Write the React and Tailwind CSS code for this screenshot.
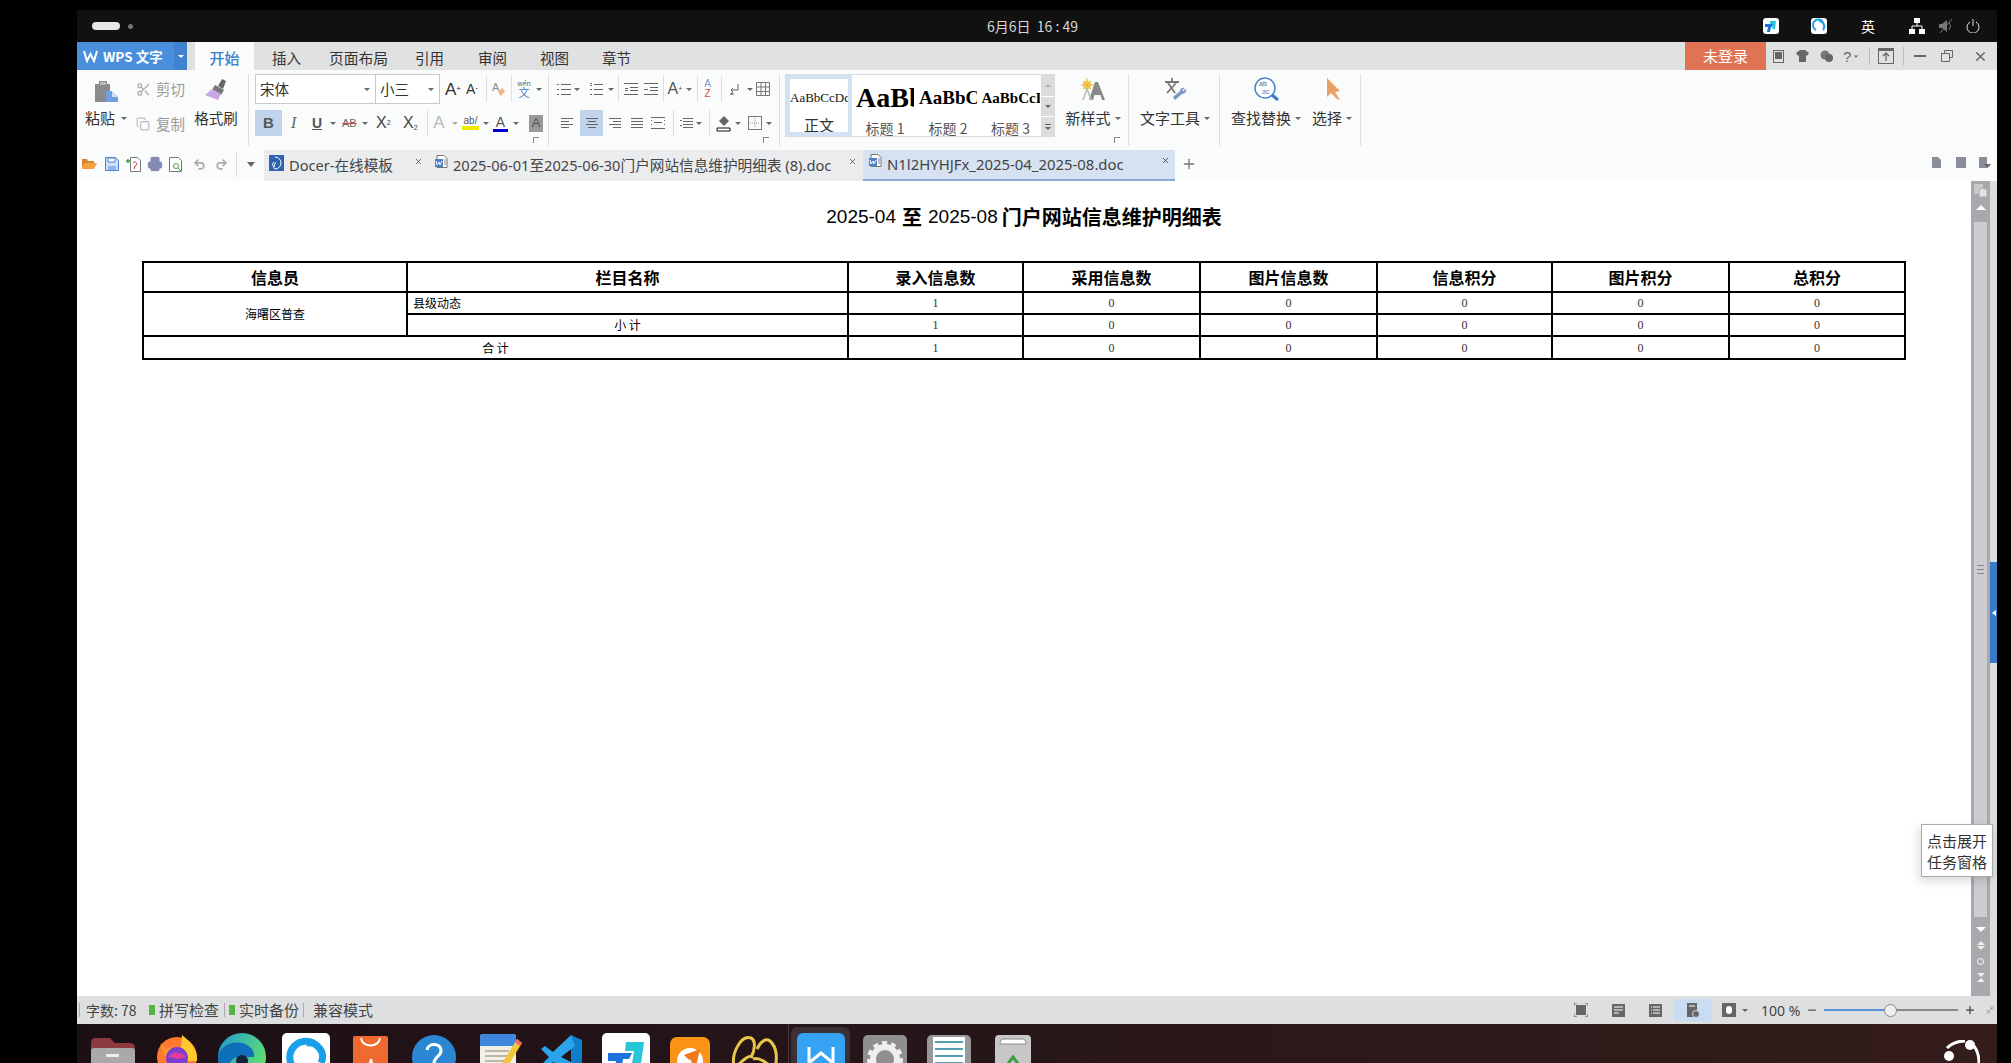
import { Scissors, Copy, Undo2, Redo2, Printer, X, Plus, Minus, Minimize2 } from "lucide-react"

const cjk = "font-['Noto_Sans_CJK_SC','Noto_Sans',sans-serif]"

function Svg({ w, h, className = "", children })
{
    return <svg width={w} height={h || w} viewBox={`0 0 ${w} ${h || w}`} className={"shrink-0 " + className}>{children}</svg>
}

function Caret({ className = "" })
{
    return <span className={"shrink-0 w-0 h-0 border-x-[3px] border-x-transparent border-t-[3px] border-t-[#666] " + className}></span>
}

function Sep({ className = "" })
{
    return <span className={"shrink-0 w-px h-[26px] bg-[#dcdfe0] " + className}></span>
}

function Launcher({ className = "" })
{
    return <span className={"absolute bottom-[3px] w-[6px] h-[6px] border-t border-l border-[#888] " + className}></span>
}

// ---- ribbon icons
const Lines = ({ className, rows }) => (
    <Svg w={14} className={className}>
        {rows.map((r, i) => <rect key={i} x={r[0]} y={r[1]} width={r[2]} height="1" fill="#666" />)}
    </Svg>
)

function PasteIcon()
{
    return (
        <Svg w={24} h={22}>
            <path d="M1 4h4V1h8v3h3v7h-3v11H1z" fill="#8b8b8b" />
            <path d="M6 2h6v3H6z" fill="#bbb" />
            <path d="M12 11h6l6 6v5H12z" fill="#6f9fe0" />
            <path d="M18 11l6 6h-6z" fill="#cfe0f6" />
        </Svg>
    )
}

function BrushIcon()
{
    return (
        <Svg w={24} h={22}>
            <path d="M14 8l4-7 4 2-3 8z" fill="#666" />
            <path d="M11 7l9 5-3 5-9-5z" fill="#777" />
            <path d="M8 11l9 5-3 6-13-5z" fill="#c9a6ea" />
        </Svg>
    )
}

function StyleNewIcon()
{
    return (
        <Svg w={25} h={23}>
            <circle cx="6" cy="7" r="4.500" fill="#f5d66a" />
            <path d="M6 0v14M0 7h13M2 3l8 8M10 3l-8 8" stroke="#e8b33c" strokeWidth="1" />
            <path d="M8 22l6-18h3l7 18h-3l-1.500-5h-6L12 22z" fill="#8a8a8a" />
            <path d="M2 22l4-11 4 11" stroke="#bbb" strokeWidth="1.500" fill="none" />
        </Svg>
    )
}

function TextToolIcon()
{
    return (
        <Svg w={23} h={23}>
            <path d="M8 0v3M1 4h14M4 5l7 10M12 5L3 15" stroke="#777" strokeWidth="1.800" fill="none" />
            <path d="M21 10c-2-1-5 0-5 3l-7 6 2 3 7-6c3 0 5-3 4-5l-3 2-1-1z" fill="#7d96c9" />
        </Svg>
    )
}

function FindIcon()
{
    return (
        <Svg w={25} h={24}>
            <circle cx="11" cy="11" r="10" fill="#fff" stroke="#4a86cf" strokeWidth="1.500" />
            <path d="M18 18l6 5" stroke="#3b78c4" strokeWidth="3" />
            <text x="5" y="9" fontSize="7" fill="#666" fontFamily="Liberation Sans">ab</text>
            <text x="8" y="17" fontSize="7" fill="#4a86cf" fontFamily="Liberation Sans">ac</text>
        </Svg>
    )
}

function CursorIcon()
{
    return (
        <Svg w={15} h={22}>
            <path d="M1 0l13 13-5 1 5 8-3-1-6-6-4 4z" fill="#e9a064" />
        </Svg>
    )
}

function DocTabIcon({ className = "", color = "#4f7fc4" })
{
    return (
        <Svg w={14} h={15} className={className}>
            <path d="M3 .5h7l3 3v9H3z" fill="#fff" stroke="#777" />
            <path d="M1 4h8v8H1z" fill={color} />
            <path d="M2 6l1 4 2-3 1 3 2-4" stroke="#fff" fill="none" />
            <path d="M10 5h2M10 7h2M10 9h2" stroke="#888" />
        </Svg>
    )
}

// ---- dock icons
function Folder()
{
    return (
        <Svg w={44} h={40}>
            <path d="M0 6q0-5 5-5h14l5 5h15q5 0 5 5v12H0z" fill="#8c3a3f" />
            <path d="M0 14q0-3 3-3h38q3 0 3 3v26H0z" fill="#a9a9aa" />
            <rect x="15" y="17" width="13" height="3" rx="1" fill="#eee" />
        </Svg>
    )
}

function Firefox()
{
    return (
        <Svg w={42} h={40}>
            <circle cx="21" cy="22" r="20" fill="#ff7a2f" />
            <path d="M26 0c10 8 16 16 15 26H24z" fill="#ffc92e" />
            <path d="M4 8l6 6 8-2-8 10z" fill="#ff9b2f" />
            <circle cx="21" cy="23" r="11" fill="#7a3fd0" />
            <path d="M12 22c4-6 14-6 18 0l-8 2z" fill="#e33aa0" />
        </Svg>
    )
}

function Edge()
{
    return (
        <Svg w={48} h={40}>
            <defs>
                <linearGradient id="edgeg" x1="0" y1="0" x2="1" y2="0.5">
                    <stop offset="0" stopColor="#1e9bd8" />
                    <stop offset="1" stopColor="#5fdc6e" />
                </linearGradient>
            </defs>
            <circle cx="24" cy="24" r="24" fill="url(#edgeg)" />
            <path d="M0 24C2 12 14 8 24 10c8 2 13 8 12 14H22c-8 0-14 6-10 18C4 38 0 32 0 24z" fill="#0f6fb8" />
            <circle cx="24" cy="28" r="6" fill="#16233a" />
        </Svg>
    )
}

function WhiteApp()
{
    return (
        <Svg w={48} h={40}>
            <rect width="48" height="48" rx="5" fill="#fff" />
            <path d="M36 14A16 16 0 1 0 14 37M24 10a14 14 0 0 1 15 20" stroke="#1aa0e8" strokeWidth="7" fill="none" />
        </Svg>
    )
}

function Bag()
{
    return (
        <Svg w={35} h={37}>
            <rect width="35" height="37" rx="2" fill="#ef6a2f" />
            <path d="M8 2c1 10 18 10 19 0" stroke="#fff" strokeWidth="2" fill="none" />
            <path d="M13 37l4-14h2l4 14h-3l-2-8-2 8z" fill="#fff" />
        </Svg>
    )
}

function Help()
{
    return (
        <Svg w={44} h={38}>
            <circle cx="22" cy="22" r="22" fill="#2b86d4" />
            <path d="M15 15c1-8 15-7 14 1 0 5-7 6-7 12" stroke="#fff" strokeWidth="3" fill="none" />
            <circle cx="22" cy="34" r="2" fill="#fff" />
        </Svg>
    )
}

function Notes()
{
    return (
        <Svg w={42} h={39}>
            <rect x="0" y="0" width="36" height="44" rx="3" fill="#f2efe6" />
            <path d="M0 3q0-3 3-3h30q3 0 3 3v9H0z" fill="#3f86de" />
            <path d="M5 17h24M5 22h24M5 27h24M5 32h18" stroke="#bdb8a8" strokeWidth="2" />
            <path d="M37 5l5 4-16 26-6 3 1-7z" fill="#f5c53a" />
            <path d="M37 5l5 4-2 3-5-4z" fill="#e86a6a" />
        </Svg>
    )
}

function VsCode()
{
    return (
        <Svg w={41} h={38}>
            <path d="M30 0l11 5v33H30z" fill="#0e7ecb" />
            <path d="M30 0L12 17 4 11 0 14l8 8-8 8 4 3 8-6 18 11 4-9-14-7 14-11z" fill="#2ba4ec" />
        </Svg>
    )
}

function BlueArrowApp()
{
    return (
        <Svg w={48} h={40}>
            <rect width="48" height="48" rx="5" fill="#fff" />
            <path d="M24 9h18l-3 22H30l2-13h-9z" fill="#27c6d8" />
            <path d="M6 20h24l-3 6h-6l-2 14H12l2-12H6z" fill="#1b73e0" />
        </Svg>
    )
}

function OrangeApp()
{
    return (
        <Svg w={40} h={36}>
            <rect width="40" height="40" rx="7" fill="#fb9416" />
            <circle cx="20" cy="24" r="13" fill="#fff" />
            <path d="M14 18l16-6-4 18z" fill="#f07a1a" />
            <circle cx="19" cy="25" r="2.500" fill="#fff" />
        </Svg>
    )
}

function Snake()
{
    return (
        <Svg w={47} h={38}>
            <path d="M3 32C0 18 10 0 20 3c5 2 4 12 0 20M26 14c4-8 9-11 13-8 7 6 8 18 4 30M22 24c6-2 16 4 20 12M4 34c6-8 14-14 16-12" stroke="#e8c64a" strokeWidth="3" fill="none" />
        </Svg>
    )
}

function WpsApp()
{
    return (
        <Svg w={48} h={30}>
            <rect width="48" height="48" rx="6" fill="#35a2f4" />
            <path d="M12 14v16l12-10 12 10V14" stroke="#fff" strokeWidth="3" fill="none" />
        </Svg>
    )
}

function Gear()
{
    return (
        <Svg w={44} h={38}>
            <rect width="44" height="44" rx="5" fill="#8f8f8f" />
            <circle cx="22" cy="24" r="12" fill="none" stroke="#eee" strokeWidth="6" />
            <circle cx="22" cy="24" r="16" fill="none" stroke="#eee" strokeWidth="4" strokeDasharray="5 4" />
        </Svg>
    )
}

function TextApp()
{
    return (
        <Svg w={44} h={38}>
            <rect width="44" height="44" rx="5" fill="#999" />
            <rect x="6" y="2" width="32" height="38" fill="#fff" />
            <path d="M8 7h28M8 14h28M8 21h28M8 28h28M8 35h28" stroke="#1f7f9c" strokeWidth="1.500" />
        </Svg>
    )
}

function Trash()
{
    return (
        <Svg w={36} h={38}>
            <rect width="36" height="44" rx="4" fill="#c7c7c7" />
            <path d="M5 9q0-5 4-5h18q4 0 4 5z" fill="#fff" stroke="#888" />
            <path d="M12 30l6-8 6 8M10 35h16" stroke="#3c9a44" strokeWidth="3" fill="none" />
        </Svg>
    )
}

const headers = ["信息员", "栏目名称", "录入信息数", "采用信息数", "图片信息数", "信息积分", "图片积分", "总积分"]

function Nums({ first })
{
    return [first, "0", "0", "0", "0", "0"].map((n, i) =>
    {
        return <td key={i} className="border-2 border-black text-center font-['Liberation_Serif',serif] text-[12px] text-[#333]">{n}</td>
    })
}

function App()
{
    return (
        <div className={"w-[2011px] h-[1063px] bg-black pl-[77px] pt-[10px] overflow-hidden text-[#333] " + cjk}>
            <div className="w-[1920px] h-[1053px] flex flex-col">

                {/* system top bar */}
                <div className="h-[32px] bg-[#111111] flex items-center shrink-0">
                    <span className="ml-[15px] w-[28px] h-[8px] rounded-full bg-[#e6e6e6]"></span>
                    <span className="ml-[8px] w-[5px] h-[5px] rounded-full bg-[#777]"></span>
                    <span className="ml-[854px] w-[101px] whitespace-nowrap text-[14px] leading-[28px] text-[#d8d8d8]">6月6日&nbsp; 16 : 49</span>
                    <Svg w={16} className="ml-[675px]">
                        <rect width="16" height="16" rx="3" fill="#fff" />
                        <path d="M7 3h6l-1 8H9l1-5H7z" fill="#27c6d8" />
                        <path d="M2 6h8l-1 3H8l-1 5H4l1-5H2z" fill="#1b73e0" />
                    </Svg>
                    <Svg w={16} className="ml-[32px]">
                        <rect width="16" height="16" rx="3" fill="#fff" />
                        <path d="M12 4a5.500 5.500 0 1 0-7 8M8 3a5.500 5.500 0 0 1 4 9" stroke="#1aa0e8" strokeWidth="2" fill="none" />
                    </Svg>
                    <span className="ml-[34px] w-[14px] text-[14px] leading-none text-white">英</span>
                    <Svg w={16} className="ml-[34px]">
                        <path d="M5 0h6v5H5zM0 11h6v5H0zM10 11h6v5h-6z" fill="#fff" />
                        <path d="M8 5v3M3 11V8h10v3" stroke="#fff" fill="none" />
                    </Svg>
                    <Svg w={16} className="ml-[13px]">
                        <path d="M1 6h3l5-4v12l-5-4H1z" fill="#777" />
                        <path d="M11 4q3 4 0 8M2 15L14 1" stroke="#777" fill="none" />
                    </Svg>
                    <Svg w={14} className="ml-[12px]">
                        <path d="M4 3a6 6 0 1 0 6 0M7 0v7" stroke="#ddd" fill="none" />
                    </Svg>
                </div>

                {/* menu tabs */}
                <div className="h-[28px] bg-[#e0e2e2] flex items-stretch shrink-0">
                    <div className="w-[97px] bg-[#4a8fdd] flex items-center pl-[6px] text-white">
                        <Svg w={15} h={13}>
                            <path d="M1 1l3 10 3.500-7 3.500 7 3-10" stroke="#fff" strokeWidth="2" fill="none" />
                        </Svg>
                        <span className="ml-[5px] text-[13.500px] font-bold whitespace-nowrap">WPS 文字</span>
                    </div>
                    <div className="w-[13px] bg-[#3f82cf] flex items-center justify-center">
                        <span className="w-0 h-0 border-x-[3px] border-x-transparent border-t-[3px] border-t-white"></span>
                    </div>
                    <div className="ml-[8px] w-[59px] bg-[#fafbfb] text-[#3a7fd0] text-[15px] font-medium leading-[32px] text-center">开始</div>
                    <span className="ml-[18px] w-[29px] text-[14.500px] leading-[32px]">插入</span>
                    <span className="ml-[28px] w-[59px] text-[14.750px] leading-[32px] whitespace-nowrap">页面布局</span>
                    <span className="ml-[27px] w-[29px] text-[14.500px] leading-[32px]">引用</span>
                    <span className="ml-[34px] w-[29px] text-[14.500px] leading-[32px]">审阅</span>
                    <span className="ml-[33px] w-[29px] text-[14.500px] leading-[32px]">视图</span>
                    <span className="ml-[33px] w-[29px] text-[14.500px] leading-[32px]">章节</span>
                    <div className="ml-[1054px] w-[81px] bg-[#df7353] text-white text-[15px] flex items-center justify-center">未登录</div>
                    <div className="flex items-center text-[#666]">
                        <Svg w={11} h={13} className="ml-[7px]">
                            <rect x=".5" y=".5" width="10" height="12" fill="none" stroke="#666" />
                            <rect x="2" y="2" width="7" height="7" fill="#666" />
                        </Svg>
                        <Svg w={13} h={12} className="ml-[12px]">
                            <path d="M4 0h5l4 3-2 3-1-1v7H3V5L2 6 0 3z" fill="#666" />
                        </Svg>
                        <Svg w={13} h={12} className="ml-[11px]">
                            <circle cx="5" cy="5" r="4.500" fill="#777" />
                            <circle cx="9" cy="8" r="4" fill="#666" />
                        </Svg>
                        <span className="ml-[10px] w-[9px] text-[15px] leading-none font-['Liberation_Sans']">?</span>
                        <Caret className="ml-[1px] scale-75" />
                        <span className="ml-[10px] w-px h-[18px] bg-[#bbb]"></span>
                        <Svg w={16} className="ml-[8px]">
                            <rect x=".5" y=".5" width="15" height="15" fill="none" stroke="#666" />
                            <path d="M0 1h16v2H0z" fill="#666" />
                            <path d="M8 13V6M5 8l3-3 3 3" stroke="#666" strokeWidth="1.300" fill="none" />
                        </Svg>
                        <span className="ml-[9px] w-px h-[18px] bg-[#bbb]"></span>
                        <span className="ml-[10px] w-[12px] h-[2px] bg-[#666]"></span>
                        <Svg w={12} className="ml-[15px]">
                            <path d="M3.500 3V.5h8v7H9M.5 3.500h8v8h-8z" fill="none" stroke="#666" />
                        </Svg>
                        <X size={15} strokeWidth={2.400} color="#666" className="ml-[20px]" />
                    </div>
                </div>

                {/* ribbon */}
                <div className="h-[80px] bg-[#fafbfb] flex items-stretch shrink-0 py-[4px]">
                    <div className="w-[172px] border-r border-[#dcdfe0] flex">
                        <div className="w-[58px] flex flex-col items-center pt-[6px]">
                            <PasteIcon />
                            <div className="mt-[6px] flex items-center text-[15px] leading-[20px]">粘贴<Caret className="ml-[6px]" /></div>
                        </div>
                        <div className="w-[55px] pl-px text-[#9a9a9a] text-[14.500px]">
                            <div className="h-[20px] mt-[5px] flex items-center">
                                <Scissors size={15} color="#aaa" />
                                <span className="ml-[5px] whitespace-nowrap">剪切</span>
                            </div>
                            <div className="h-[20px] mt-[15px] flex items-center">
                                <Copy size={14} color="#bbb" />
                                <span className="ml-[6px] whitespace-nowrap">复制</span>
                            </div>
                        </div>
                        <div className="ml-[4px] w-[44px] flex flex-col items-center pt-[4px]">
                            <BrushIcon />
                            <div className="mt-[8px] text-[14.500px] leading-[20px] whitespace-nowrap">格式刷</div>
                        </div>
                    </div>

                    <div className="w-[300px] border-r border-[#dcdfe0] pl-[6px] relative">
                        <div className="h-[30px] flex items-center">
                            <div className="w-[121px] h-[30px] border border-[#c8cbcd] bg-white flex items-center justify-between px-[4px] text-[14.500px]">宋体<Caret className="mr-[1px]" /></div>
                            <div className="w-[64px] h-[30px] border border-l-0 border-[#c8cbcd] bg-white flex items-center justify-between px-[4px] text-[14.500px]">小三<Caret className="mr-[1px]" /></div>
                            <span className="ml-[5px] w-[16px] text-[17px] leading-none font-['Liberation_Sans'] whitespace-nowrap">A<sup className="text-[8px]">+</sup></span>
                            <span className="ml-[5px] w-[12px] text-[14px] leading-none font-['Liberation_Sans'] whitespace-nowrap">A<sup className="text-[8px]">-</sup></span>
                            <Sep className="ml-[8px]" />
                            <Svg w={13} h={16} className="ml-[5px]">
                                <text x="0" y="10" fontSize="11" fill="#888" fontFamily="Liberation Sans">A</text>
                                <path d="M6 11l4-4 3 3-4 5z" fill="#eeb27a" />
                            </Svg>
                            <Sep className="ml-[6px]" />
                            <span className="ml-[5px] w-[14px] flex flex-col items-center leading-none">
                                <span className="text-[7px] text-[#666]">wén</span>
                                <span className="text-[11px] text-[#4a7fc0]">文</span>
                            </span>
                            <Caret className="ml-[5px]" />
                        </div>
                        <div className="mt-[6px] h-[26px] flex items-center font-['Liberation_Sans']">
                            <span className="w-[27px] h-[26px] bg-[#c0d5ec] text-[#555] text-[15px] font-bold flex items-center justify-center">B</span>
                            <span className="ml-[9px] w-[8px] text-[16px] italic font-['Liberation_Serif'] text-[#666]">I</span>
                            <span className="ml-[13px] w-[11px] text-[14px] font-bold text-[#555] underline">U</span>
                            <Caret className="ml-[7px]" />
                            <span className="ml-[6px] w-[16px] text-[11px] line-through decoration-[#d04a4a] text-[#666]">AB</span>
                            <Caret className="ml-[4px]" />
                            <span className="ml-[8px] w-[15px] text-[16px] text-[#444] whitespace-nowrap">X<sup className="text-[7px]">2</sup></span>
                            <span className="ml-[12px] w-[16px] text-[16px] text-[#444] whitespace-nowrap">X<sub className="text-[7px]">2</sub></span>
                            <Sep className="ml-[8px]" />
                            <span className="ml-[3px] w-[16px] text-[17px] text-[#bbb] text-center">A</span>
                            <Caret className="ml-[5px] opacity-50" />
                            <span className="ml-[4px] w-[17px] flex flex-col items-center leading-none">
                                <span className="text-[10px] text-[#555]">ab/</span>
                                <span className="w-full h-[4px] bg-[#f5e800]"></span>
                            </span>
                            <Caret className="ml-[4px]" />
                            <span className="ml-[4px] w-[15px] flex flex-col items-center leading-none">
                                <span className="text-[14px] text-[#555]">A</span>
                                <span className="w-full h-[3px] bg-[#0000d0]"></span>
                            </span>
                            <Caret className="ml-[5px]" />
                            <span className="ml-[10px] w-[14px] h-[17px] bg-[#999] text-[#555] text-[13px] flex items-center justify-center">A</span>
                        </div>
                        <Launcher className="right-[9px]" />
                    </div>

                    <div className="w-[231px] border-r border-[#dcdfe0] pl-[8px] relative">
                        <div className="h-[30px] flex items-center">
                            <Lines rows={[[4, 2, 10], [4, 7, 10], [4, 12, 10], [0, 2, 2], [0, 7, 2], [0, 12, 2]]} />
                            <Caret className="ml-[3px]" />
                            <Lines className="ml-[9px]" rows={[[5, 2, 9], [5, 7, 9], [5, 12, 9], [1, 1, 2], [1, 3, 2], [1, 7, 2], [1, 12, 2]]} />
                            <Caret className="ml-[5px]" />
                            <Sep className="ml-[4px]" />
                            <Lines className="ml-[5px]" rows={[[0, 1, 14], [6, 5, 8], [6, 8, 8], [0, 12, 14], [1, 6, 3], [1, 8, 3]]} />
                            <Lines className="ml-[6px]" rows={[[0, 1, 14], [6, 5, 8], [6, 8, 8], [0, 12, 14], [0, 7, 4]]} />
                            <Sep className="ml-[5px]" />
                            <span className="ml-[3px] w-[16px] text-[16px] leading-none text-[#555] text-center font-['Liberation_Sans'] whitespace-nowrap">A<sup className="text-[7px]">+</sup></span>
                            <Caret className="ml-[3px]" />
                            <Sep className="ml-[5px]" />
                            <span className="ml-[5px] w-[9px] flex flex-col items-center leading-none text-[10px] font-['Liberation_Sans']">
                                <span className="text-[#7a9ad0]">A</span>
                                <span className="text-[#d05050]">Z</span>
                            </span>
                            <Sep className="ml-[9px]" />
                            <Svg w={12} className="ml-[7px]">
                                <path d="M9 1v6H2M4 5L2 7l2 2M3 9v3M1 11h4" stroke="#666" fill="none" />
                            </Svg>
                            <Caret className="ml-[6px]" />
                            <Svg w={14} className="ml-[3px]">
                                <path d="M.5.5h13v13H.5zM5 .5v13M9.500.5v13M.5 5h13M.5 9.500h13" stroke="#777" fill="none" />
                            </Svg>
                        </div>
                        <div className="mt-[6px] h-[26px] flex items-center">
                            <Lines className="ml-[4px]" rows={[[0, 2, 12], [0, 5, 8], [0, 8, 12], [0, 11, 8]]} />
                            <span className="ml-[5px] w-[23px] h-[26px] bg-[#c0d5ec] flex items-center justify-center">
                                <Lines rows={[[1, 2, 12], [3, 5, 8], [1, 8, 12], [3, 11, 8]]} />
                            </span>
                            <Lines className="ml-[6px]" rows={[[0, 2, 12], [4, 5, 8], [0, 8, 12], [4, 11, 8]]} />
                            <Lines className="ml-[8px]" rows={[[0, 2, 12], [0, 5, 12], [0, 8, 12], [0, 11, 12]]} />
                            <Lines className="ml-[6px]" rows={[[0, 1, 14], [0, 12, 14], [0, 4, 1], [13, 4, 1], [3, 6, 8], [0, 8, 1], [13, 8, 1]]} />
                            <Sep className="ml-[8px]" />
                            <Lines className="ml-[5px]" rows={[[4, 2, 10], [4, 5, 10], [4, 8, 10], [4, 11, 10], [1, 4, 2], [1, 9, 2]]} />
                            <Caret className="ml-[3px]" />
                            <Sep className="ml-[7px]" />
                            <Svg w={15} h={18} className="ml-[6px]">
                                <path d="M3 7l5-5 5 5-5 5z" fill="#666" />
                                <path d="M1 14h13v3H1z" fill="#fff" stroke="#111" />
                            </Svg>
                            <Caret className="ml-[4px]" />
                            <Svg w={14} className="ml-[7px]">
                                <rect x=".5" y=".5" width="13" height="13" fill="none" stroke="#777" />
                                <path d="M7 2v10M2 7h10" stroke="#999" strokeDasharray="1 1" />
                            </Svg>
                            <Caret className="ml-[4px]" />
                        </div>
                        <Launcher className="right-[10px]" />
                    </div>

                    <div className="w-[349px] border-r border-[#dcdfe0] pl-[5px] flex relative">
                        <div className="w-[270px] h-[63px] flex bg-white overflow-hidden border border-[#dcdcdc]">
                            <div className="w-[66px] h-[61px] border-4 border-[#d4e0f3] flex flex-col items-center overflow-hidden">
                                <div className="h-[38px] w-[58px] overflow-hidden whitespace-nowrap text-[13px] leading-[37px] font-['Liberation_Serif',serif] text-[#111]">AaBbCcDd</div>
                                <div className="text-[15px] leading-[15px]">正文</div>
                            </div>
                            <div className="w-[64px] pl-[2px] flex flex-col items-center">
                                <div className="h-[46px] w-[58px] overflow-hidden whitespace-nowrap text-[28px] font-bold leading-[46px] font-['Liberation_Serif',serif] text-black">AaBb</div>
                                <div className="text-[14px] leading-[14px] text-[#555] whitespace-nowrap">标题 1</div>
                            </div>
                            <div className="w-[64px] flex flex-col items-center">
                                <div className="h-[46px] w-[58px] overflow-hidden whitespace-nowrap text-[19px] font-bold leading-[46px] font-['Liberation_Serif',serif] text-black">AaBbC</div>
                                <div className="text-[14px] leading-[14px] text-[#555] whitespace-nowrap">标题 2</div>
                            </div>
                            <div className="w-[61px] flex flex-col items-center">
                                <div className="h-[46px] w-[58px] overflow-hidden whitespace-nowrap text-[15px] font-bold leading-[46px] font-['Liberation_Serif',serif] text-black">AaBbCcD</div>
                                <div className="text-[14px] leading-[14px] text-[#555] whitespace-nowrap">标题 3</div>
                            </div>
                            <div className="w-[13px] bg-[#dcdcdc] flex flex-col">
                                <div className="h-[21px] flex items-center justify-center"><Caret className="rotate-180 opacity-40" /></div>
                                <div className="h-[21px] border-y border-white flex items-center justify-center"><Caret /></div>
                                <div className="h-[19px] flex flex-col gap-[2px] items-center justify-center"><span className="w-[6px] h-px bg-[#666]"></span><Caret /></div>
                            </div>
                        </div>
                        <div className="ml-[8px] w-[60px] flex flex-col items-center pt-[4px]">
                            <StyleNewIcon />
                            <div className="mt-[7px] flex items-center text-[15px] leading-[20px] whitespace-nowrap">新样式<Caret className="ml-[4px]" /></div>
                        </div>
                        <Launcher className="right-[8px]" />
                    </div>

                    <div className="w-[91px] border-r border-[#dcdfe0] pl-[11px] flex flex-col items-start">
                        <div className="pl-[24px] pt-[4px]"><TextToolIcon /></div>
                        <div className="mt-[7px] flex items-center text-[15px] leading-[20px] whitespace-nowrap">文字工具<Caret className="ml-[4px]" /></div>
                    </div>

                    <div className="w-[141px] border-r border-[#dcdfe0] pl-[11px] flex">
                        <div className="w-[81px] flex flex-col">
                            <div className="pl-[23px] pt-[3px]"><FindIcon /></div>
                            <div className="mt-[7px] flex items-center text-[15px] leading-[20px] whitespace-nowrap">查找替换<Caret className="ml-[4px]" /></div>
                        </div>
                        <div className="flex flex-col">
                            <div className="pl-[14px] pt-[4px]"><CursorIcon /></div>
                            <div className="mt-[8px] flex items-center text-[15px] leading-[20px] whitespace-nowrap">选择<Caret className="ml-[4px]" /></div>
                        </div>
                    </div>
                </div>

                {/* quick access + document tabs */}
                <div className="h-[31px] bg-[#fafbfb] flex items-stretch shrink-0">
                    <div className="w-[187px] flex items-center pb-[3px]">
                        <Svg w={15} h={12} className="ml-[5px]">
                            <path d="M0 11V1h5l1 2h6v2H3z" fill="#d9862a" />
                            <path d="M0 11l3-6h12l-3 6z" fill="#f4a142" />
                        </Svg>
                        <Svg w={14} className="ml-[8px]">
                            <path d="M.5.5h10l3 3v10H.5z" fill="#cfe0f6" stroke="#4a86cf" />
                            <path d="M3 1h7v4H3z" fill="#fff" stroke="#4a86cf" />
                            <path d="M3 9h8v4H3z" fill="#8fb4e6" />
                        </Svg>
                        <Svg w={15} className="ml-[7px]">
                            <path d="M4.500.500h7l3 3v11h-10z" fill="#fff" stroke="#777" />
                            <path d="M0 4h4M2 2v4" stroke="#3aa03a" strokeWidth="1.500" />
                            <path d="M7 6a2 2 0 1 1 2 3l-1 3" stroke="#c83c3c" fill="none" />
                        </Svg>
                        <Printer size={16} color="#8488b4" fill="#8488b4" strokeWidth={1.500} className="ml-[6px] shrink-0" />
                        <Svg w={14} h={15} className="ml-[6px]">
                            <path d="M.5.500h9l3 3v11H.5z" fill="#fff" stroke="#777" />
                            <circle cx="7" cy="9" r="2.500" fill="none" stroke="#4a9a4a" />
                            <path d="M9 11l3 3" stroke="#4a9a4a" />
                        </Svg>
                        <Undo2 size={13} color="#aaa" strokeWidth={3} className="ml-[10px] shrink-0" />
                        <Redo2 size={13} color="#aaa" strokeWidth={3} className="ml-[9px] shrink-0" />
                        <span className="ml-[8px] w-px h-[25px] bg-[#dcdfe0]"></span>
                        <span className="ml-[10px] w-0 h-0 border-x-[4px] border-x-transparent border-t-[5px] border-t-[#666]"></span>
                    </div>
                    <div className="w-[165px] bg-[#ebecee] flex items-center text-[14.600px] text-[#444] pl-[5px]">
                        <Svg w={15} h={16} className="mb-[5px]">
                            <rect width="15" height="16" fill="#2f62b0" />
                            <path d="M6 2a6 6 0 0 1 0 12c-2 0-1-4 1-7M5 12a3 3 0 0 1 0-5" stroke="#fff" fill="none" />
                        </Svg>
                        <span className="ml-[5px] w-[105px] whitespace-nowrap font-['Noto_Sans','Noto_Sans_CJK_SC',sans-serif]">Docer-在线模板</span>
                        <X size={9} color="#444" className="ml-[20px] mb-[8px] shrink-0" />
                    </div>
                    <div className="w-[434px] bg-[#ebecee] flex items-center text-[14.650px] text-[#444] pl-[5px]">
                        <DocTabIcon className="mb-[6px]" />
                        <span className="ml-[5px] w-[377px] whitespace-nowrap font-['Noto_Sans','Noto_Sans_CJK_SC',sans-serif]">2025-06-01至2025-06-30门户网站信息维护明细表 (8).doc</span>
                        <X size={9} color="#444" className="ml-[18px] mb-[8px] shrink-0" />
                    </div>
                    <div className="w-[312px] bg-[#d6e2f1] border-b-2 border-[#88a8cf] flex items-center text-[14.900px] text-[#444] pl-[5px]">
                        <DocTabIcon className="mb-[6px]" />
                        <span className="ml-[5px] w-[236px] whitespace-nowrap font-['Noto_Sans','Noto_Sans_CJK_SC',sans-serif]">N1l2HYHJFx_2025-04_2025-08.doc</span>
                        <X size={9} color="#333" className="ml-[38px] mb-[8px] shrink-0" />
                    </div>
                    <Plus size={16} color="#777" strokeWidth={2} className="ml-[6px] self-center mb-[3px] shrink-0" />
                    <div className="flex items-center pb-[6px]">
                        <Svg w={9} h={11} className="ml-[735px]"><path d="M0 0h6l3 3v8H0z" fill="#8b8d99" /></Svg>
                        <span className="ml-[15px] w-[10px] h-[11px] bg-[#8b8d99]"></span>
                        <Svg w={12} h={12} className="ml-[13px]"><path d="M0 0h8v11H0z" fill="#8b8d99" /><path d="M5 7h7l-3.500 4z" fill="#666" /></Svg>
                    </div>
                </div>

                {/* document */}
                <div className="h-[815px] flex shrink-0 relative">
                    <div className="w-[1894px] bg-white pl-[65px]">
                        <div className="w-[1764px] mt-[24px] h-[24px] mb-[32px] flex items-center justify-center text-black text-[20px] leading-[24px] whitespace-nowrap">
                            <span className="font-['Liberation_Sans'] text-[19px]">2025-04</span>
                            <span className="font-bold mx-[6px] text-[20px]">至</span>
                            <span className="font-['Liberation_Sans'] text-[19px] mr-[4px]">2025-08</span>
                            <span className="font-bold">门户网站信息维护明细表</span>
                        </div>
                        <table className="table-fixed w-[1762px] border-collapse border-2 border-black text-black">
                            <colgroup>
                                <col className="w-[264px]" />
                                <col className="w-[441px]" />
                                <col className="w-[175px]" />
                                <col className="w-[177px]" />
                                <col className="w-[177px]" />
                                <col className="w-[175px]" />
                                <col className="w-[177px]" />
                                <col className="w-[176px]" />
                            </colgroup>
                            <thead>
                                <tr className="h-[30px]">
                                    {headers.map((h) =>
                                    {
                                        return <th key={h} className="border-2 border-black text-[16px] font-bold p-0">{h}</th>
                                    })}
                                </tr>
                            </thead>
                            <tbody className="text-[12px]">
                                <tr className="h-[22px]">
                                    <td rowSpan={2} className="border-2 border-black text-center">海曙区普查</td>
                                    <td className="border-2 border-black pl-[5px]">县级动态</td>
                                    <Nums first="1" />
                                </tr>
                                <tr className="h-[22px]">
                                    <td className="border-2 border-black text-center">小 计</td>
                                    <Nums first="1" />
                                </tr>
                                <tr className="h-[23px]">
                                    <td colSpan={2} className="border-2 border-black text-center">合 计</td>
                                    <Nums first="1" />
                                </tr>
                            </tbody>
                        </table>
                    </div>

                    {/* scrollbar */}
                    <div className="w-[19px] bg-[#a8a9ad] flex flex-col items-center">
                        <div className="h-[41px] flex flex-col items-center">
                            <Svg w={13} h={13} className="mt-[3px]">
                                <path d="M0 0h9v10H0z" fill="#c9c9cb" />
                                <path d="M5 7l3-3 2 1h3v8H5z" fill="#e4e4e6" stroke="#a8a9ad" />
                            </Svg>
                            <span className="mt-[8px] w-0 h-0 border-x-[5px] border-x-transparent border-b-[5px] border-b-white"></span>
                        </div>
                        <div className="w-[13px] h-[695px] bg-[#cdcdd1] flex flex-col items-center justify-center gap-[3px]">
                            <span className="w-[7px] h-px bg-[#888]"></span>
                            <span className="w-[7px] h-px bg-[#888]"></span>
                            <span className="w-[7px] h-px bg-[#888]"></span>
                        </div>
                        <div className="flex-1 flex flex-col items-center pt-[10px]">
                            <span className="w-0 h-0 border-x-[5px] border-x-transparent border-t-[5px] border-t-white"></span>
                            <Svg w={8} h={9} className="mt-[9px]"><path d="M4 0l4 4H0zM0 5h8L4 9z" fill="#eee" transform="rotate(0)" /></Svg>
                            <span className="mt-[8px] w-[7px] h-[7px] rounded-full border border-white"></span>
                            <Svg w={8} h={9} className="mt-[8px]"><path d="M0 0h8L4 4zM4 5l4 4H0z" fill="#eee" /></Svg>
                        </div>
                    </div>

                    {/* task pane strip */}
                    <div className="w-[7px] bg-[#dcdddd] pt-[381px]">
                        <div className="h-[101px] bg-[#3a78c8] flex items-center justify-center">
                            <span className="w-0 h-0 border-y-[3px] border-y-transparent border-r-[4px] border-r-white"></span>
                        </div>
                    </div>

                    <div className="absolute left-[1844px] top-[643px] w-[72px] h-[53px] bg-white border border-[#aaa] shadow-[-2px_4px_10px_rgba(0,0,0,0.15)] flex flex-col items-center justify-center text-[15px] leading-[21px] text-[#333]">
                        <span>点击展开</span>
                        <span>任务窗格</span>
                    </div>
                </div>

                {/* status bar */}
                <div className="h-[28px] bg-[#dddfe0] flex items-center shrink-0 text-[14px] text-[#444]">
                    <span className="ml-[2px] w-px h-[14px] bg-[#aaa]"></span>
                    <span className="ml-[6px] w-[54px] whitespace-nowrap">字数: 78</span>
                    <span className="ml-[9px] w-[6px] h-[10px] bg-[#55b53f]"></span>
                    <span className="ml-[4px] w-[60px] whitespace-nowrap text-[15px]">拼写检查</span>
                    <span className="ml-[5px] w-px h-[14px] bg-[#aaa]"></span>
                    <span className="ml-[4px] w-[6px] h-[10px] bg-[#55b53f]"></span>
                    <span className="ml-[4px] w-[60px] whitespace-nowrap text-[15px]">实时备份</span>
                    <span className="ml-[4px] w-px h-[14px] bg-[#aaa]"></span>
                    <span className="ml-[9px] w-[60px] whitespace-nowrap text-[15px]">兼容模式</span>

                    <Svg w={14} className="ml-[1201px]">
                        <path d="M0 3V0h3M11 0h3v3M14 11v3h-3M3 14H0v-3" stroke="#555" fill="none" />
                        <rect x="2" y="2" width="10" height="10" fill="#666" />
                    </Svg>
                    <Svg w={13} className="ml-[24px]">
                        <rect width="13" height="13" fill="#666" />
                        <path d="M2 3h9M2 6h9M2 9h5" stroke="#fff" />
                    </Svg>
                    <Svg w={13} className="ml-[24px]">
                        <rect width="13" height="13" fill="#666" />
                        <path d="M4 3h7M4 6h7M4 9h7M2 3h1M2 6h1M2 9h1" stroke="#fff" />
                    </Svg>
                    <span className="ml-[12px] w-[38px] h-[22px] bg-[#c9dcf2] flex items-center justify-center">
                        <Svg w={13} h={15}>
                            <rect width="10" height="14" fill="#666" />
                            <path d="M2 3h6" stroke="#fff" />
                            <circle cx="9" cy="11" r="3.500" fill="#666" stroke="#c9dcf2" />
                        </Svg>
                    </span>
                    <span className="ml-[10px] w-[14px] h-[14px] bg-[#666] flex items-center justify-center">
                        <span className="w-[6px] h-[8px] rounded-full bg-white"></span>
                    </span>
                    <Caret className="ml-[6px]" />
                    <span className="ml-[13px] w-[39px] whitespace-nowrap text-[14px] font-['Noto_Sans',sans-serif]">100 %</span>
                    <Minus size={12} color="#555" strokeWidth={2.500} className="ml-[6px] shrink-0" />
                    <div className="ml-[6px] w-[134px] h-[13px] flex items-center relative">
                        <span className="w-[67px] h-[2px] bg-[#5a8fd8]"></span>
                        <span className="w-[67px] h-[2px] bg-[#888]"></span>
                        <span className="absolute left-[60px] top-0 w-[13px] h-[13px] rounded-full bg-[#eee] border border-[#888]"></span>
                    </div>
                    <Plus size={12} color="#444" strokeWidth={2.500} className="ml-[6px] shrink-0" />
                    <Minimize2 size={10} color="#999" className="ml-[9px] shrink-0" />
                </div>

                {/* dock */}
                <div className="h-[39px] bg-gradient-to-r from-[#1c1016] to-[#341d1b] flex items-start shrink-0 overflow-hidden">
                    <div className="ml-[14px] mt-[13px]"><Folder /></div>
                    <div className="ml-[21px] mt-[11px]"><Firefox /></div>
                    <div className="ml-[20px] mt-[9px]"><Edge /></div>
                    <div className="ml-[16px] mt-[9px]"><WhiteApp /></div>
                    <div className="ml-[23px] mt-[12px]"><Bag /></div>
                    <div className="ml-[24px] mt-[11px]"><Help /></div>
                    <div className="ml-[24px] mt-[10px]"><Notes /></div>
                    <div className="ml-[19px] mt-[11px]"><VsCode /></div>
                    <div className="ml-[20px] mt-[9px]"><BlueArrowApp /></div>
                    <div className="ml-[20px] mt-[13px]"><OrangeApp /></div>
                    <div className="ml-[21px] mt-[11px]"><Snake /></div>
                    <span className="ml-[10px] w-px h-[39px] bg-[#4a3a40]"></span>
                    <div className="ml-[2px] mt-[3px] w-[59px] h-[40px] bg-[#3a3036] rounded-t-[6px] pl-[6px] pt-[6px]"><WpsApp /></div>
                    <div className="ml-[13px] mt-[11px]"><Gear /></div>
                    <div className="ml-[20px] mt-[11px]"><TextApp /></div>
                    <div className="ml-[24px] mt-[11px]"><Trash /></div>
                    <Svg w={36} h={23} className="ml-[913px] mt-[16px]">
                        <path d="M3 8C8 3 14 1 21 1M30 6c4 5 5 10 5 17" stroke="#fff" strokeWidth="3" fill="none" />
                        <circle cx="26" cy="5" r="5" fill="#fff" />
                        <circle cx="5" cy="16" r="5" fill="#fff" />
                    </Svg>
                </div>
            </div>
        </div>
    )
}

export default App
